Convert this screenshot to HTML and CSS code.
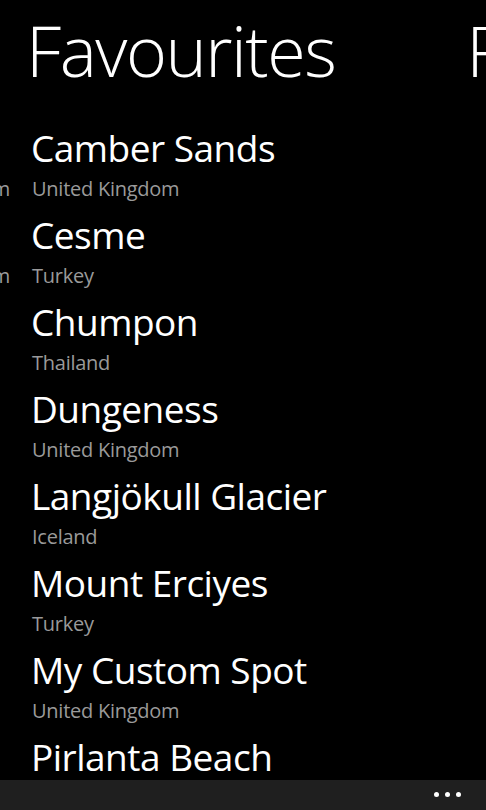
FILE: index.html
```html
<!DOCTYPE html>
<html lang="en">
<head>
    <meta charset="UTF-8">
    <meta name="viewport" content="width=device-width, initial-scale=1.0">
    <title>Favourites</title>
    <link rel="stylesheet" href="styles.css">
</head>
<body>
    <div class="phone">
        <div class="pivot-headers">
            <h1 class="pivot-title">Favourites</h1>
            <h1 class="pivot-title next">Recent</h1>
        </div>

        <div class="pivot-body">
            <!-- previous pivot page, just peeking in from the left -->
            <div class="peek">
                <div class="spot"><div class="spot-name">&nbsp;</div><div class="spot-country">United Kingdom</div></div>
                <div class="spot"><div class="spot-name">&nbsp;</div><div class="spot-country">United Kingdom</div></div>
            </div>

            <ul class="spot-list">
                <li class="spot"><div class="spot-name">Camber Sands</div><div class="spot-country">United Kingdom</div></li>
                <li class="spot"><div class="spot-name">Cesme</div><div class="spot-country">Turkey</div></li>
                <li class="spot"><div class="spot-name">Chumpon</div><div class="spot-country">Thailand</div></li>
                <li class="spot"><div class="spot-name">Dungeness</div><div class="spot-country">United Kingdom</div></li>
                <li class="spot"><div class="spot-name">Langjökull Glacier</div><div class="spot-country">Iceland</div></li>
                <li class="spot"><div class="spot-name">Mount Erciyes</div><div class="spot-country">Turkey</div></li>
                <li class="spot"><div class="spot-name">My Custom Spot</div><div class="spot-country">United Kingdom</div></li>
                <li class="spot"><div class="spot-name">Pirlanta Beach</div><div class="spot-country">Turkey</div></li>
            </ul>
        </div>

        <div class="app-bar">
            <button class="more" aria-label="more">
                <span class="dot"></span><span class="dot"></span><span class="dot"></span>
            </button>
        </div>
    </div>
</body>
</html>
```

FILE: styles.css
```css
* {
    margin: 0;
    padding: 0;
    box-sizing: border-box;
}

html, body {
    height: 100%;
    background: #000;
}

body {
    font-family: "Open Sans", "Noto Sans", sans-serif;
    color: #fff;
    overflow: hidden;
}

.phone {
    height: 100vh;
    display: flex;
    flex-direction: column;
}

.pivot-headers {
    display: flex;
    gap: 131px;
    padding: 10px 0 0 26px;
    white-space: nowrap;
    overflow: hidden;
}

.pivot-title {
    font-size: 70px;
    font-weight: 300;
    line-height: 80px;
    letter-spacing: -1.5px;
    flex-shrink: 0;
}

.pivot-body {
    flex: 1;
    min-height: 0;
    display: flex;
    overflow: hidden;
    padding-top: 36px;
}

.peek {
    width: 10px;
    overflow: hidden;
    flex-shrink: 0;
}

.peek .spot {
    display: flex;
    flex-direction: column;
    align-items: flex-end;
}

.spot-list {
    list-style: none;
    padding-left: 21px;
}

.spot {
    padding-bottom: 11px;
    white-space: nowrap;
}

.spot-name {
    font-size: 37px;
    line-height: 44px;
    letter-spacing: -0.5px;
}

.spot-country {
    font-size: 20px;
    line-height: 26px;
    margin-top: 6px;
    padding-left: 1px;
    letter-spacing: -0.25px;
    color: #9a9a9a;
}

.app-bar {
    height: 30px;
    background: #1f1f1f;
    display: flex;
    justify-content: flex-end;
    flex-shrink: 0;
}

.more {
    background: transparent;
    border: none;
    display: flex;
    gap: 6px;
    padding: 12px 25px 0 0;
    height: 30px;
    align-items: flex-start;
}

.dot {
    width: 5px;
    height: 5px;
    border-radius: 50%;
    background: #fff;
}
```
